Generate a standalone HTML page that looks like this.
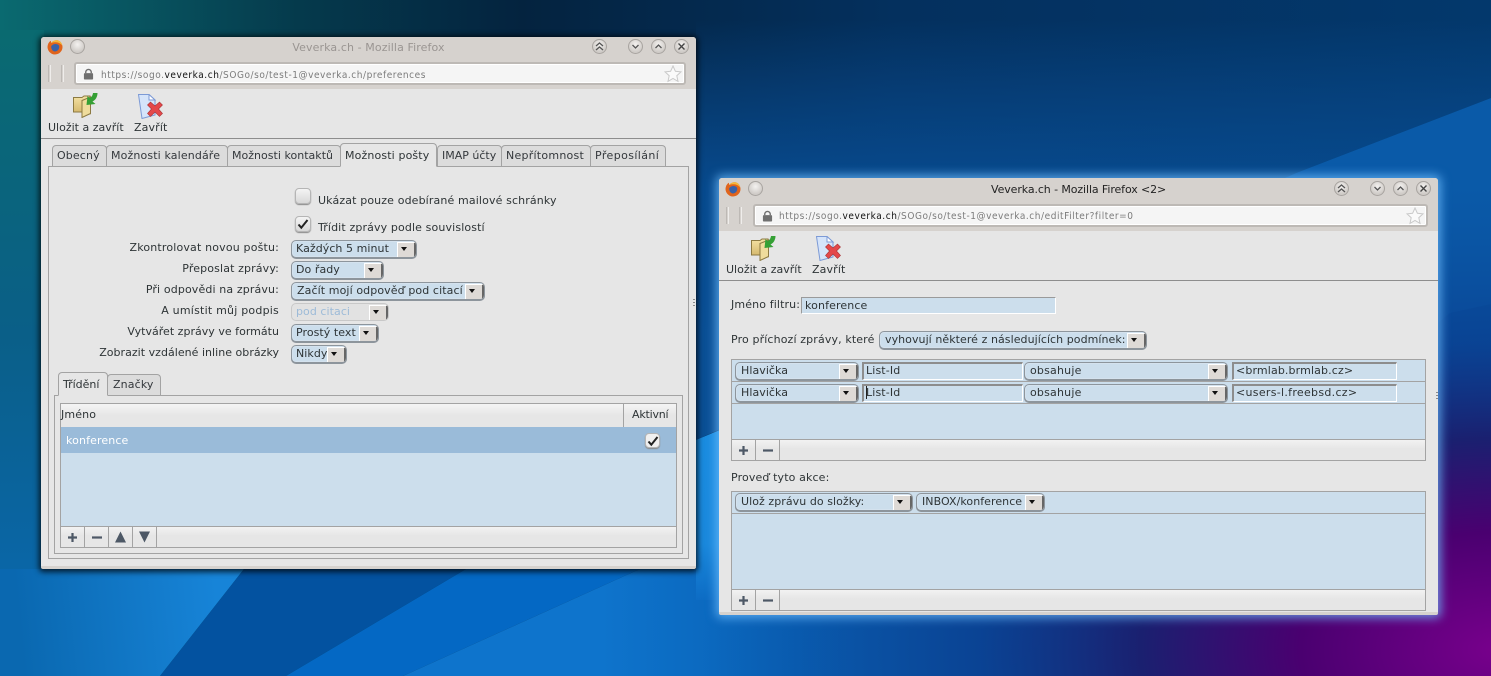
<!DOCTYPE html>
<html lang="cs"><head><meta charset="utf-8"><title>Veverka.ch</title>
<style>
html,body{margin:0;padding:0;width:1491px;height:676px;overflow:hidden;background:#04305c}
body{position:relative;font:11px/14px "DejaVu Sans","Liberation Sans",sans-serif;color:#2e3436;letter-spacing:.13px}
#bg{position:absolute;left:0;top:0}
.abs,.t,.s,.i,.tab,.box,.w,.bar,.ln,.b,.url,.wb,.cb{position:absolute;box-sizing:border-box}
.t{white-space:nowrap;height:14px}
.r{text-align:right;left:60px;width:219px}
.w{background:#e6e6e6;border-radius:3px 3px 2px 2px;border-bottom:3px solid #d6d2ce}
.w1{left:41px;top:37px;width:655px;height:532px;box-shadow:0 1px 6px 2px rgba(0,0,0,.75)}
.w2{left:719px;top:178px;width:719px;height:437px;box-shadow:0 0 10px 3px rgba(110,190,255,.75)}
.title{position:absolute;left:0;right:0;top:0;height:22px;background:#d6d2ce;border-radius:3px 3px 0 0}
.urlrow{position:absolute;left:0;right:0;top:22px;height:30px;background:#d6d2ce}
.w2 .title{height:23px}.w2 .urlrow{top:23px}
.url{top:3px;height:23px;background:#f5f5f5;border:2px solid #bdb9b5;border-radius:3px;box-shadow:inset 0 0 0 1px #fff}
.u{position:absolute;left:25px;top:4px;font:10px/14px "DejaVu Sans Condensed","DejaVu Sans",sans-serif;letter-spacing:.55px;color:#7b7b7b;white-space:nowrap}
.u b{font-weight:normal;color:#111}
.hd{position:absolute;top:6px;width:3px;height:17px;border-left:1px solid #bdb9b5;border-right:1px solid #efedeb;box-sizing:border-box}
.ttl{position:absolute;left:0;right:0;top:4px;text-align:center;white-space:nowrap}
.ln{height:1px;background:#8d8d8d}
.tab{height:22px;border:1px solid #a3a3a3;border-bottom:0;border-radius:4px 4px 0 0;background:#dcdcdc;padding:3px 0 0 4px;white-space:nowrap;color:#34383c}
.tab.on{background:#e6e6e6;border-bottom:1px solid #e6e6e6;color:#2e3436}
.box{border:1px solid #a3a3a3}
.s{height:18px;background:#ccdeec;border:1px solid #8d959c;border-radius:5px;box-shadow:0 1px 0 #8d959c,inset 0 0 0 1px #d4e2ee;padding:1px 0 0 5px;white-space:nowrap;overflow:hidden;letter-spacing:.06px}
.s.p4{padding-left:4px}
.s i{position:absolute;right:0;top:1px;width:16px;height:14px;background:#dedad6;border-right:2px solid #666;border-bottom:2px solid #777;border-left:1px solid #fff;border-top:1px solid #fff}
.s i:after{content:"";position:absolute;left:3px;top:4px;border:3.5px solid transparent;border-top:4px solid #111;border-bottom:0}
.s.d{background:#e2e2e2;border-color:#c8c8c8;box-shadow:none;color:#9dbbd8}
.i{background:#ccdeec;border:1px solid #fff;border-top:2px solid #8d8d8d;border-left:2px solid #8d8d8d;padding:0 0 0 2px;white-space:nowrap;height:18px;line-height:13px}
.bar{background:linear-gradient(#f2f2f2,#e6e6e6 45%);border:1px solid #a3a3a3;height:22px}
.b{top:0;bottom:0;width:24px;border-right:1px solid #a3a3a3;color:#4d5866}
.cb{width:16px;height:16px;background:linear-gradient(#f4f4f4,#d8d8d8);border:1px solid #b5b5b5;border-radius:4px;box-shadow:0 1px 1px #888}
.wb{width:15px;height:15px;border-radius:50%;background:radial-gradient(circle at 50% 35%,#f4f2f0,#cfcbc7 70%);border:1px solid #a8a4a0}
.wb svg{position:absolute;left:2px;top:2px}
.hdc{position:absolute;background:linear-gradient(#f4f4f4,#e6e6e6 50%)}
.grip{position:absolute;width:2px;height:9px;background:repeating-linear-gradient(#8a8a8a 0 1px,transparent 1px 3px)}
</style></head><body>
<svg id="bg" width="1491" height="676" viewBox="0 0 1491 676">
<defs>
<linearGradient id="g0" x1="0" y1="0" x2="1" y2="0"><stop offset="0" stop-color="#0a6a70"/><stop offset=".2" stop-color="#053a4c"/><stop offset=".35" stop-color="#04233f"/><stop offset=".6" stop-color="#04305e"/><stop offset="1" stop-color="#03386c"/></linearGradient>
<linearGradient id="g1" gradientUnits="userSpaceOnUse" x1="0" y1="20" x2="0" y2="330"><stop offset="0" stop-color="#0a5098" stop-opacity="0"/><stop offset=".55" stop-color="#074a8e"/><stop offset="1" stop-color="#0a4f95"/></linearGradient>
<linearGradient id="g2" gradientUnits="userSpaceOnUse" x1="0" y1="30" x2="0" y2="640"><stop offset="0" stop-color="#0a6a70"/><stop offset=".5" stop-color="#0a5f88"/><stop offset="1" stop-color="#0a68b0"/></linearGradient>
<linearGradient id="g3" gradientUnits="userSpaceOnUse" x1="20" y1="640" x2="220" y2="620"><stop offset="0" stop-color="#0a68b0"/><stop offset="1" stop-color="#1784d8"/></linearGradient>
<linearGradient id="g4" gradientUnits="userSpaceOnUse" x1="600" y1="0" x2="1000" y2="0"><stop offset="0" stop-color="#0e74cc"/><stop offset=".5" stop-color="#0960b5"/><stop offset="1" stop-color="#0b50a0"/></linearGradient>
<linearGradient id="g5" gradientUnits="userSpaceOnUse" x1="0" y1="440" x2="0" y2="600"><stop offset="0" stop-color="#1a8ce0"/><stop offset=".65" stop-color="#1a88dc"/><stop offset="1" stop-color="#0d6cc4"/></linearGradient>
<linearGradient id="fy" x1="0" y1="0" x2="0" y2="1"><stop offset="0" stop-color="#f4e2a4"/><stop offset="1" stop-color="#d2b468"/></linearGradient>
<radialGradient id="p" gradientUnits="userSpaceOnUse" cx="1500" cy="650" r="470" gradientTransform="translate(1500 650) scale(1.7 1) translate(-1500 -650)"><stop offset="0" stop-color="#78008c"/><stop offset=".25" stop-color="#4a0070"/><stop offset=".45" stop-color="#1a2070"/><stop offset=".65" stop-color="#0a3f90" stop-opacity=".8"/><stop offset="1" stop-color="#0a50a0" stop-opacity="0"/></radialGradient>
</defs>
<rect width="1491" height="676" fill="url(#g0)"/>
<rect x="0" y="30" width="44" height="646" fill="url(#g2)"/>
<polygon points="696,0 1491,0 1491,98 1296,173 696,440" fill="url(#g1)"/>
<polygon points="1491,98 1296,173 720,430 696,440 696,676 1491,676" fill="#0a5aa8"/>
<polygon points="0,569 244,569 160,676 0,676" fill="url(#g3)"/>
<polygon points="244,569 466,569 286,676 160,676" fill="#0352a0"/>
<polygon points="466,569 640,569 403,676 286,676" fill="#0468c4"/>
<polygon points="640,569 1491,569 1491,676 403,676" fill="url(#g4)"/>
<polygon points="1450,313 1491,304 1491,676 1000,676" fill="#0752a0"/>
<rect x="400" y="100" width="1091" height="576" fill="url(#p)"/>
<polygon points="696,440 720,430 720,600 696,600" fill="url(#g5)"/>
</svg>

<svg width="0" height="0" style="position:absolute">
<defs>
<symbol id="ff" viewBox="0 0 16 16"><circle cx="8.500" cy="8" r="5" fill="#3a62a8"/><path d="M8 15.500A7.500 7.500 0 0 1 .8 6C1.300 4 2.500 2.500 4 1.800L4 4C5.500 2 8 1 10.500 1.300 13.500 2 15.500 5 15.500 8A7.500 7.500 0 0 1 8 15.500ZM8 12.500A4.500 4.500 0 0 0 12 6.500C11 5.300 9.500 4.800 8 5 6.500 5.200 5 6 4.200 7.200 4 9.800 5.500 12.500 8 12.500Z" fill="#e0641c"/><path d="M4 4C5.500 2 8 1 10.500 1.300 13 1.800 14.800 4 15.200 6.500 13.500 4.500 11.500 3.300 9 3.300 7 3.300 5.500 3.500 4 4Z" fill="#f5b93a"/></symbol>
<symbol id="fold" viewBox="0 0 25 25"><path d="M.5 4.500H9L11 3H17V21H9V19H.5Z" fill="url(#fy)" stroke="#8c7a42"/><path d="M9 7.500L17.500 4V20.500L9 24.500Z" fill="#efdc9c" stroke="#8c7a42"/><path d="M24.500 0H20C19.500 3 18.500 4 16.500 5L14.500 3 13.500 12 22.500 11 19.500 8.500C22.500 7 24.500 4 24.500 0Z" fill="#35a035"/></symbol>
<symbol id="pg" viewBox="0 0 25 25"><path d="M.5 .5H11L17 6V21L4 24.500Z" fill="#d5e4fa" stroke="#7c9ad6"/><path d="M11 .5L17 6H11Z" fill="#fff" stroke="#7c9ad6"/><path d="M9.500 11L12.500 8 17 12 21.500 8 24.500 11 20.500 15 24.500 19.500 21.500 22.500 17 18 12.500 22.500 9.500 19.500 13.500 15Z" fill="#e4484a" stroke="#a83436" stroke-width=".6"/></symbol>
<symbol id="star" viewBox="0 0 18 18"><path d="M9 1l2.400 5.300 5.600.6-4.200 3.800 1.200 5.700L9 13.500 4 16.400l1.200-5.700L1 6.900l5.600-.6z" fill="#fafafa" stroke="#c9c9c9"/></symbol>
<symbol id="lock" viewBox="0 0 12 12"><path d="M3 5V4a3 3 0 0 1 6 0v1" fill="none" stroke="#707070" stroke-width="1.500"/><rect x="1" y="5" width="10" height="7" rx="1" fill="#707070"/></symbol>
<symbol id="up2" viewBox="0 0 9 9"><path d="M1 4l3.500-3L8 4M1 8l3.500-3L8 8" fill="none" stroke="#555" stroke-width="1.300"/></symbol>
<symbol id="dn" viewBox="0 0 9 9"><path d="M1.500 3l3 3 3-3" fill="none" stroke="#555" stroke-width="1.300"/></symbol>
<symbol id="up" viewBox="0 0 9 9"><path d="M1.500 6l3-3 3 3" fill="none" stroke="#555" stroke-width="1.300"/></symbol>
<symbol id="x" viewBox="0 0 9 9"><path d="M1.500 1.500l6 6M7.500 1.500l-6 6" fill="none" stroke="#444" stroke-width="1.400"/></symbol>
<symbol id="chk" viewBox="0 0 14 14"><path d="M2.500 7.500l2.800 3.200L11.500 3" fill="none" stroke="#222" stroke-width="2"/></symbol>
</defs>
</svg>

<!-- WINDOW 1 -->
<div class="w w1">
 <div class="title"></div>
 <div class="urlrow">
  <div class="hd" style="left:7px"></div><div class="hd" style="left:20px"></div>
  <div class="url" style="left:33px;width:612px">
   <svg class="abs" style="left:7px;top:4px" width="11" height="12"><use href="#lock"/></svg>
   <div class="u" style="top:5px">https://sogo.<b>veverka.ch</b>/SOGo/so/test-1@veverka.ch/preferences</div>
   <svg class="abs" style="right:2px;top:1px" width="18" height="18"><use href="#star"/></svg>
  </div>
 </div>
 <div class="ttl" style="color:#9a9592;left:0;letter-spacing:.1px">Veverka.ch - Mozilla Firefox</div>
 <svg class="abs" style="left:6px;top:2px" width="16" height="16"><use href="#ff"/></svg>
 <div class="wb" style="left:29px;top:2px"></div>
 <div class="wb" style="left:551px;top:2px"><svg width="9" height="9"><use href="#up2"/></svg></div>
 <div class="wb" style="left:587px;top:2px"><svg width="9" height="9"><use href="#dn"/></svg></div>
 <div class="wb" style="left:610px;top:2px"><svg width="9" height="9"><use href="#up"/></svg></div>
 <div class="wb" style="left:633px;top:2px"><svg width="9" height="9"><use href="#x"/></svg></div>
 <svg class="abs" style="left:32px;top:56px" width="25" height="25"><use href="#fold"/></svg>
 <svg class="abs" style="left:97px;top:57px" width="25" height="25"><use href="#pg"/></svg>
 <div class="t" style="left:7px;top:84px;letter-spacing:0">Uložit a zavřít</div>
 <div class="t" style="left:93px;top:84px">Zavřít</div>
 <div class="ln" style="left:0;right:0;top:101px"></div>
 <div class="grip" style="left:652px;top:262px"></div>
</div>
<div class="tab" style="left:52px;top:145px;width:55px">Obecný</div>
<div class="tab" style="left:106px;top:145px;width:122px">Možnosti kalendáře</div>
<div class="tab" style="left:227px;top:145px;width:114px;letter-spacing:.02px">Možnosti kontaktů</div>
<div class="tab" style="left:437px;top:145px;width:65px;letter-spacing:0">IMAP účty</div>
<div class="tab" style="left:501px;top:145px;width:90px;letter-spacing:.25px">Nepřítomnost</div>
<div class="tab" style="left:590px;top:145px;width:76px;letter-spacing:.4px">Přeposílání</div>
<div class="box" style="left:48px;top:166px;width:641px;height:393px"></div>
<div class="tab on" style="left:340px;top:143px;width:97px;height:24px;padding-top:5px;z-index:2">Možnosti pošty</div>

<div class="cb" style="left:295px;top:188px"></div>
<div class="t" style="left:318px;top:194px">Ukázat pouze odebírané mailové schránky</div>
<div class="cb" style="left:295px;top:216px"><svg class="abs" style="left:0;top:0" width="14" height="14"><use href="#chk"/></svg></div>
<div class="t" style="left:318px;top:221px;letter-spacing:.13px">Třídit zprávy podle souvislostí</div>

<div class="t r" style="top:241px;letter-spacing:.17px">Zkontrolovat novou poštu:</div>
<div class="t r" style="top:262px">Přeposlat zprávy:</div>
<div class="t r" style="top:283px">Při odpovědi na zprávu:</div>
<div class="t r" style="top:304px;letter-spacing:.22px">A umístit můj podpis</div>
<div class="t r" style="top:325px;letter-spacing:.02px">Vytvářet zprávy ve formátu</div>
<div class="t r" style="top:346px;letter-spacing:.03px">Zobrazit vzdálené inline obrázky</div>
<div class="s p4" style="left:291px;top:240px;width:126px">Každých 5 minut<i></i></div>
<div class="s p4" style="left:291px;top:261px;width:93px">Do řady<i></i></div>
<div class="s" style="left:291px;top:282px;width:194px;letter-spacing:.1px">Začít mojí odpověď pod citací<i></i></div>
<div class="s d p4" style="left:291px;top:303px;width:98px">pod citaci<i></i></div>
<div class="s p4" style="left:291px;top:324px;width:88px">Prostý text<i></i></div>
<div class="s p4" style="left:291px;top:345px;width:56px">Nikdy<i></i></div>

<div class="tab" style="left:107px;top:374px;width:54px;height:21px;padding:3px 0 0 5px">Značky</div>
<div class="box" style="left:54px;top:395px;width:629px;height:159px"></div>
<div class="tab on" style="left:58px;top:372px;width:50px;height:24px;padding-top:5px;z-index:2;letter-spacing:0">Třídění</div>
<div class="box" style="left:60px;top:403px;width:617px;height:144px;background:#ccdeec">
 <div class="hdc" style="left:0;right:0;top:0;height:23px;border-bottom:1px solid #a3a3a3"></div>
 <div class="t" style="left:0;top:4px">Jméno</div>
 <div class="abs" style="left:562px;top:0;height:23px;width:1px;background:#a3a3a3"></div>
 <div class="t" style="left:571px;top:4px;letter-spacing:-.2px">Aktivní</div>
 <div class="abs" style="left:0;right:0;top:23px;height:26px;background:#9abbd9"></div>
 <div class="t" style="left:5px;top:30px;color:#fff">konference</div>
 <div class="cb" style="left:584px;top:29px;width:15px;height:15px;background:#f0f0f0"><svg class="abs" style="left:0;top:0" width="14" height="14"><use href="#chk"/></svg></div>
</div>
<div class="bar" style="left:60px;top:526px;width:617px">
 <div class="b" style="left:0"><svg width="24" height="20"><path d="M7 10.500h9M11.500 6v9" stroke="#4d5866" stroke-width="2.200"/></svg></div>
 <div class="b" style="left:24px"><svg width="24" height="20"><path d="M7 10.500h10" stroke="#4d5866" stroke-width="2.200"/></svg></div>
 <div class="b" style="left:48px"><svg width="24" height="20"><path d="M6 15.500l5.500-11 5.500 11z" fill="#4d5866"/></svg></div>
 <div class="b" style="left:72px"><svg width="24" height="20"><path d="M6 4.500l5.500 11 5.500-11z" fill="#4d5866"/></svg></div>
</div>

<!-- WINDOW 2 -->
<div class="w w2">
 <div class="title"></div>
 <div class="urlrow">
  <div class="hd" style="left:7px"></div><div class="hd" style="left:20px"></div>
  <div class="url" style="left:34px;width:675px">
   <svg class="abs" style="left:7px;top:4px" width="11" height="12"><use href="#lock"/></svg>
   <div class="u" style="left:24px">https://sogo.<b>veverka.ch</b>/SOGo/so/test-1@veverka.ch/editFilter?filter=0</div>
   <svg class="abs" style="right:2px;top:1px" width="18" height="18"><use href="#star"/></svg>
  </div>
 </div>
 <div class="t" style="left:272px;top:5px;color:#222;letter-spacing:-.1px">Veverka.ch - Mozilla Firefox &lt;2&gt;</div>
 <svg class="abs" style="left:6px;top:3px" width="16" height="16"><use href="#ff"/></svg>
 <div class="wb" style="left:29px;top:3px"></div>
 <div class="wb" style="left:615px;top:3px"><svg width="9" height="9"><use href="#up2"/></svg></div>
 <div class="wb" style="left:651px;top:3px"><svg width="9" height="9"><use href="#dn"/></svg></div>
 <div class="wb" style="left:674px;top:3px"><svg width="9" height="9"><use href="#up"/></svg></div>
 <div class="wb" style="left:697px;top:3px"><svg width="9" height="9"><use href="#x"/></svg></div>
 <svg class="abs" style="left:32px;top:58px" width="25" height="25"><use href="#fold"/></svg>
 <svg class="abs" style="left:97px;top:58px" width="25" height="25"><use href="#pg"/></svg>
 <div class="t" style="left:7px;top:85px;letter-spacing:0">Uložit a zavřít</div>
 <div class="t" style="left:93px;top:85px">Zavřít</div>
 <div class="ln" style="left:0;right:0;top:102px"></div>
 <div class="grip" style="left:717px;top:214px"></div>
</div>
<div class="t" style="left:731px;top:298px">Jméno filtru:</div>
<div class="i" style="left:801px;top:297px;width:255px;height:17px;border-top:1px solid #9a9a9a;border-left:1px solid #9a9a9a;padding-top:1px;padding-left:3px">konference</div>
<div class="t" style="left:731px;top:333px">Pro příchozí zprávy, které</div>
<div class="s" style="left:879px;top:331px;width:268px">vyhovují některé z následujících podmínek:<i></i></div>

<div class="box" style="left:731px;top:359px;width:695px;height:81px;background:#ccdeec">
 <div class="abs" style="left:0;right:0;top:21px;height:1px;background:#a3a3a3"></div>
 <div class="abs" style="left:0;right:0;top:43px;height:1px;background:#a3a3a3"></div>
</div>
<div class="s" style="left:735px;top:362px;width:124px">Hlavička<i></i></div>
<div class="i" style="left:862px;top:362px;width:161px">List-Id</div>
<div class="s" style="left:1024px;top:362px;width:204px;letter-spacing:.2px">obsahuje<i></i></div>
<div class="i" style="left:1232px;top:362px;width:165px">&lt;brmlab.brmlab.cz&gt;</div>
<div class="s" style="left:735px;top:384px;width:124px">Hlavička<i></i></div>
<div class="i" style="left:862px;top:384px;width:161px">List-Id</div>
<div class="abs" style="left:866px;top:386px;width:1px;height:13px;background:#222"></div>
<div class="s" style="left:1024px;top:384px;width:204px;letter-spacing:.2px">obsahuje<i></i></div>
<div class="i" style="left:1232px;top:384px;width:165px;letter-spacing:.3px">&lt;users-l.freebsd.cz&gt;</div>
<div class="bar" style="left:731px;top:439px;width:695px">
 <div class="b" style="left:0"><svg width="24" height="20"><path d="M7 10.500h9M11.500 6v9" stroke="#4d5866" stroke-width="2.200"/></svg></div>
 <div class="b" style="left:24px"><svg width="24" height="20"><path d="M7 10.500h10" stroke="#4d5866" stroke-width="2.200"/></svg></div>
</div>
<div class="t" style="left:731px;top:471px">Proveď tyto akce:</div>
<div class="box" style="left:731px;top:491px;width:695px;height:99px;background:#ccdeec">
 <div class="abs" style="left:0;right:0;top:21px;height:1px;background:#a3a3a3"></div>
</div>
<div class="s" style="left:735px;top:493px;width:178px">Ulož zprávu do složky:<i></i></div>
<div class="s" style="left:916px;top:493px;width:129px">INBOX/konference<i></i></div>
<div class="bar" style="left:731px;top:589px;width:695px">
 <div class="b" style="left:0"><svg width="24" height="20"><path d="M7 10.500h9M11.500 6v9" stroke="#4d5866" stroke-width="2.200"/></svg></div>
 <div class="b" style="left:24px"><svg width="24" height="20"><path d="M7 10.500h10" stroke="#4d5866" stroke-width="2.200"/></svg></div>
</div>
</body></html>
